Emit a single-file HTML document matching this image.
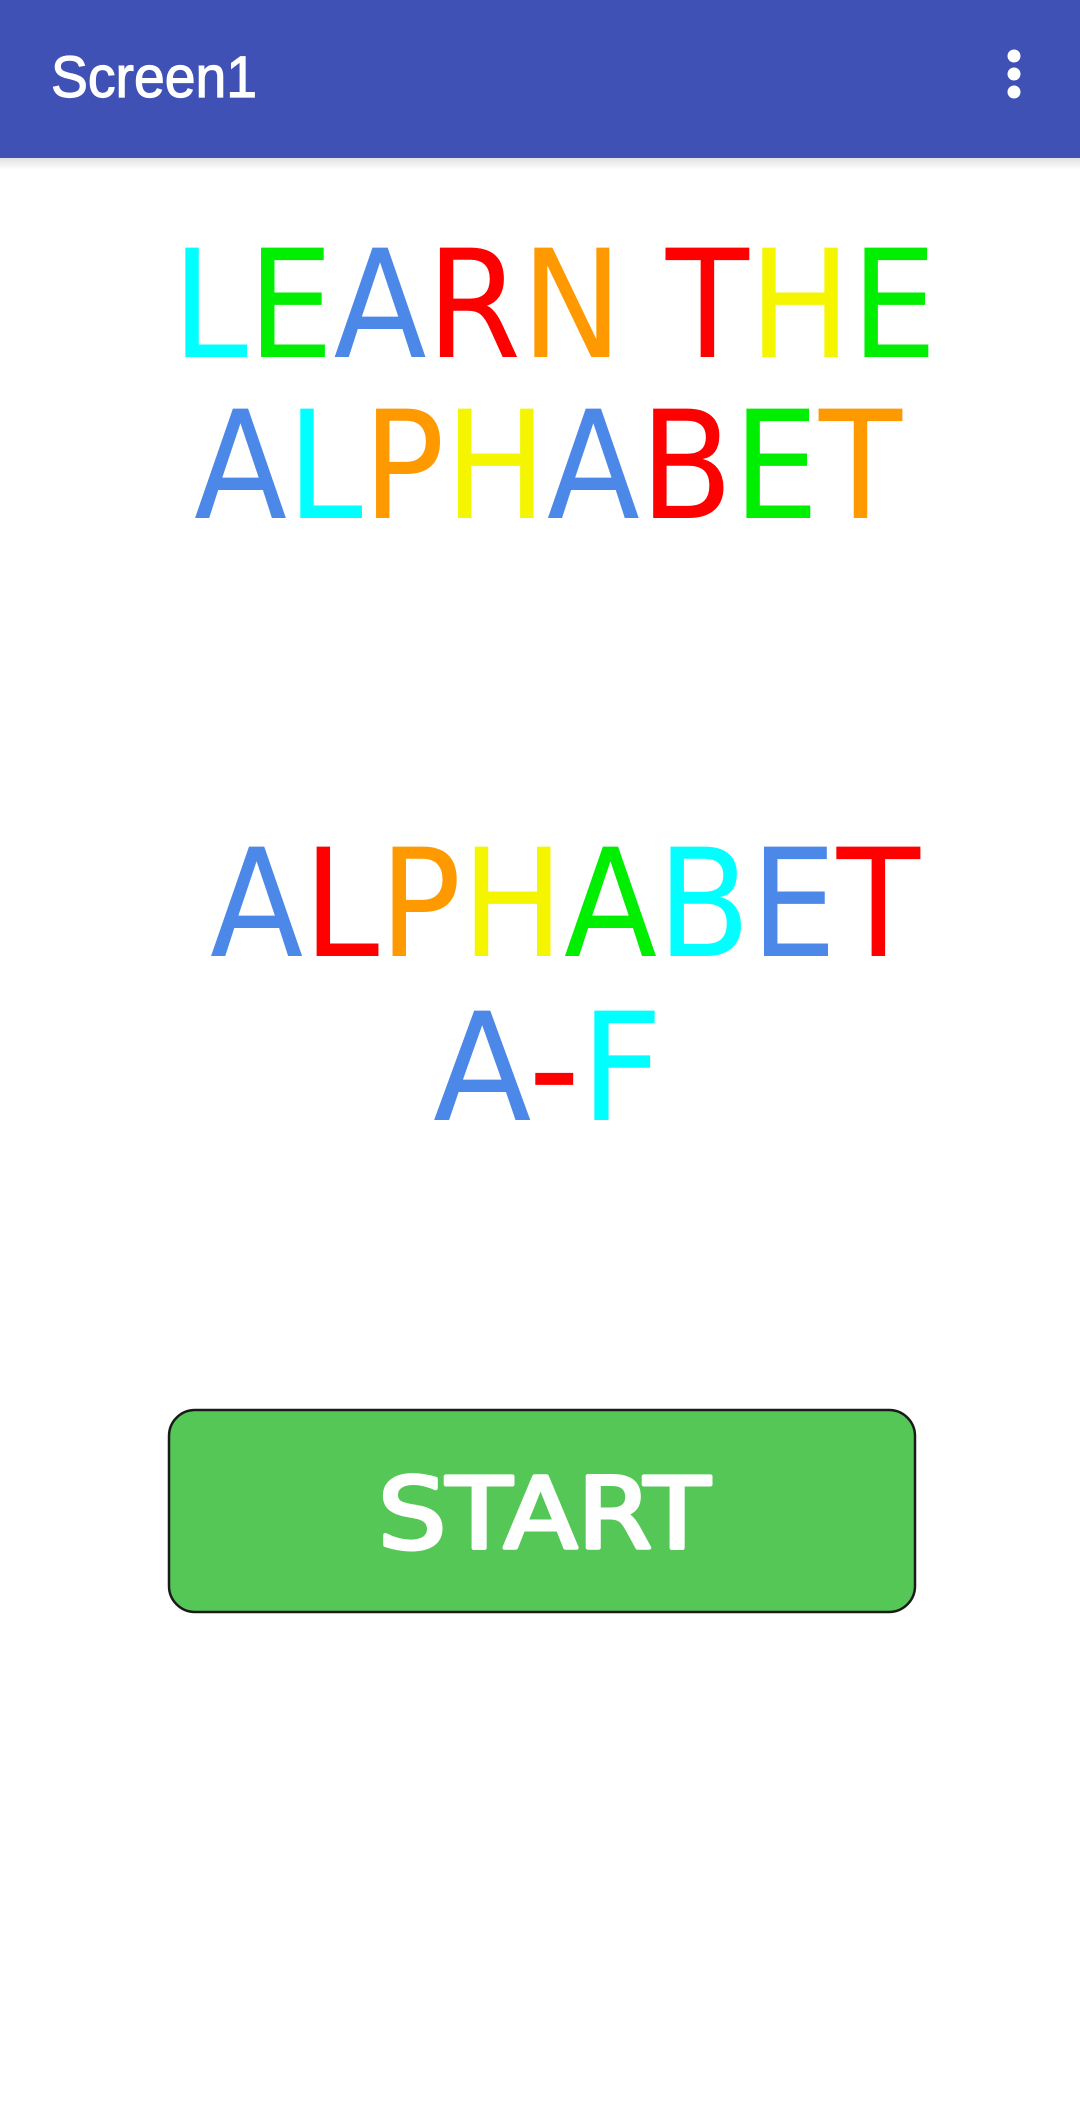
<!DOCTYPE html>
<html><head><meta charset="utf-8"><style>
html,body{margin:0;padding:0;background:#fff;width:1080px;height:2104px;overflow:hidden}
svg{display:block}
</style></head><body>
<svg width="1080" height="2104" viewBox="0 0 1080 2104" xmlns="http://www.w3.org/2000/svg">
<defs>
<linearGradient id="sh" x1="0" y1="0" x2="0" y2="1"><stop offset="0" stop-color="#000" stop-opacity="0.12"/><stop offset="1" stop-color="#000" stop-opacity="0"/></linearGradient>
</defs>
<rect x="0" y="0" width="1080" height="158" fill="#3F51B5"/>
<rect x="0" y="158" width="1080" height="12" fill="url(#sh)"/>
<text x="51" y="97" font-family="Liberation Sans, sans-serif" font-size="58" fill="#fff" stroke="#fff" stroke-width="1.2" textLength="206" lengthAdjust="spacingAndGlyphs">Screen1</text>
<circle cx="1014" cy="56" r="6.5" fill="#fff"/><circle cx="1014" cy="74" r="6.5" fill="#fff"/><circle cx="1014" cy="92" r="6.5" fill="#fff"/>

<g font-family="DejaVu Sans, sans-serif" font-size="150" stroke-linejoin="round">
<text x="172" y="357" textLength="765" lengthAdjust="spacingAndGlyphs"><tspan fill="#00FFFF">L</tspan><tspan fill="#00EE00">E</tspan><tspan fill="#4C88E8">A</tspan><tspan fill="#FF0000">R</tspan><tspan fill="#FF9900">N</tspan> <tspan fill="#FF0000">T</tspan><tspan fill="#F5F500">H</tspan><tspan fill="#00EE00">E</tspan></text>
<text x="194" y="518" textLength="708" lengthAdjust="spacingAndGlyphs"><tspan fill="#4C88E8">A</tspan><tspan fill="#00FFFF">L</tspan><tspan fill="#FF9900">P</tspan><tspan fill="#F5F500">H</tspan><tspan fill="#4C88E8">A</tspan><tspan fill="#FF0000">B</tspan><tspan fill="#00EE00">E</tspan><tspan fill="#FF9900">T</tspan></text>
<text x="210" y="956" textLength="710" lengthAdjust="spacingAndGlyphs"><tspan fill="#4C88E8">A</tspan><tspan fill="#FF0000">L</tspan><tspan fill="#FF9900">P</tspan><tspan fill="#F5F500">H</tspan><tspan fill="#00EE00">A</tspan><tspan fill="#00FFFF">B</tspan><tspan fill="#4C88E8">E</tspan><tspan fill="#FF0000">T</tspan></text>
<text x="433" y="1120" textLength="230" lengthAdjust="spacingAndGlyphs"><tspan fill="#4C88E8">A</tspan><tspan fill="#FF0000">-</tspan><tspan fill="#00FFFF">F</tspan></text>
</g>

<rect x="169" y="1410" width="746" height="202" rx="26" ry="26" fill="#55C757" stroke="#1a1a1a" stroke-width="2.5"/>
<text x="378" y="1548" font-family="DejaVu Sans, sans-serif" font-size="98" fill="#fff" stroke="#fff" stroke-width="4" stroke-linejoin="round" textLength="332" lengthAdjust="spacingAndGlyphs">START</text>
</svg>
</body></html>
